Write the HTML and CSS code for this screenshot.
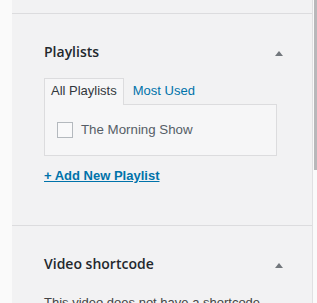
FILE: index.html
```html
<!DOCTYPE html>
<html lang="en">
<head>
  <meta charset="UTF-8">
  <meta name="viewport" content="width=device-width, initial-scale=1">
  <title>Video settings</title>
  <link rel="stylesheet" href="styles.css">
</head>
<body>
  <div class="layout">
    <div class="gutter"></div>

    <div class="panel">
      <div class="panel-top"></div>

      <div class="section">
        <div class="section-head">
          <h2>Playlists</h2>
          <span class="toggle"></span>
        </div>

        <ul class="tabs">
          <li class="tab active">All Playlists</li>
          <li class="tab"><a href="#">Most Used</a></li>
        </ul>
        <div class="tab-box">
          <label class="check"><input type="checkbox"> <span>The Morning Show</span></label>
        </div>

        <p class="add-new"><a href="#">+ Add New Playlist</a></p>
      </div>

      <div class="section">
        <div class="section-head">
          <h2>Video shortcode</h2>
          <span class="toggle"></span>
        </div>
        <p class="note">This video does not have a shortcode.</p>
      </div>
    </div>

    <div class="scrollbar"><div class="thumb"></div></div>
  </div>
</body>
</html>
```

FILE: styles.css
```css
body { margin: 0; font-family: "Liberation Sans", Arial, sans-serif; font-size: 13px; color: #32373c; background: #fafafa; }
.layout { display: flex; height: 303px; overflow: hidden; }
.gutter { width: 12px; flex: none; background: #fafafa; }
.panel { width: 300px; flex: none; background: #f2f2f3; border-right: 1px solid #e0e0e2; }
.panel-top { height: 13px; border-bottom: 1px solid #dcdcde; }
.section { padding: 28px 29px 40px 32px; border-bottom: 1px solid #dcdcde; }
.section-head { display: flex; justify-content: space-between; align-items: flex-start; }
.section-head h2 { margin: 0; font-family: "Open Sans", sans-serif; font-weight: 600; font-size: 14px; line-height: 20px; color: #23282d; }
.toggle { width: 0; height: 0; margin: 9px 0 0; border-left: 4px solid transparent; border-right: 4px solid transparent; border-bottom: 5px solid #72777c; }
.tabs { display: flex; list-style: none; margin: 16px 6px 0 0; padding: 0; }
.tab { padding: 3px 6px 4px; line-height: 18px; border: 1px solid transparent; border-bottom: none; margin-bottom: -1px; }
.tab.active { background: #f6f6f7; border-color: #dcdcde; padding-bottom: 5px; position: relative; }
.tab a { color: #0073aa; text-decoration: none; margin-left: 2px; }
.tab-box { margin-right: 6px; padding: 17px 12px 17px; background: #f6f6f7; border: 1px solid #dcdcde; }
.check { display: flex; align-items: center; gap: 8px; color: #555d66; font-size: 13.3px; line-height: 16px; }
.check input { appearance: none; margin: 0; width: 16px; height: 16px; border: 1px solid #b4b9be; background: #f9f9fa; box-sizing: border-box; }
.add-new { margin: 11px 0 0; line-height: 18px; }
.add-new a { color: #0073aa; font-weight: bold; text-decoration: underline; }
.note { margin: 20px 0 0; line-height: 18px; color: #444; }
.scrollbar { flex: 1; background: #fafafa; }
.thumb { width: 3px; height: 170px; margin-left: 1px; background: #b8b8ba; }
```
